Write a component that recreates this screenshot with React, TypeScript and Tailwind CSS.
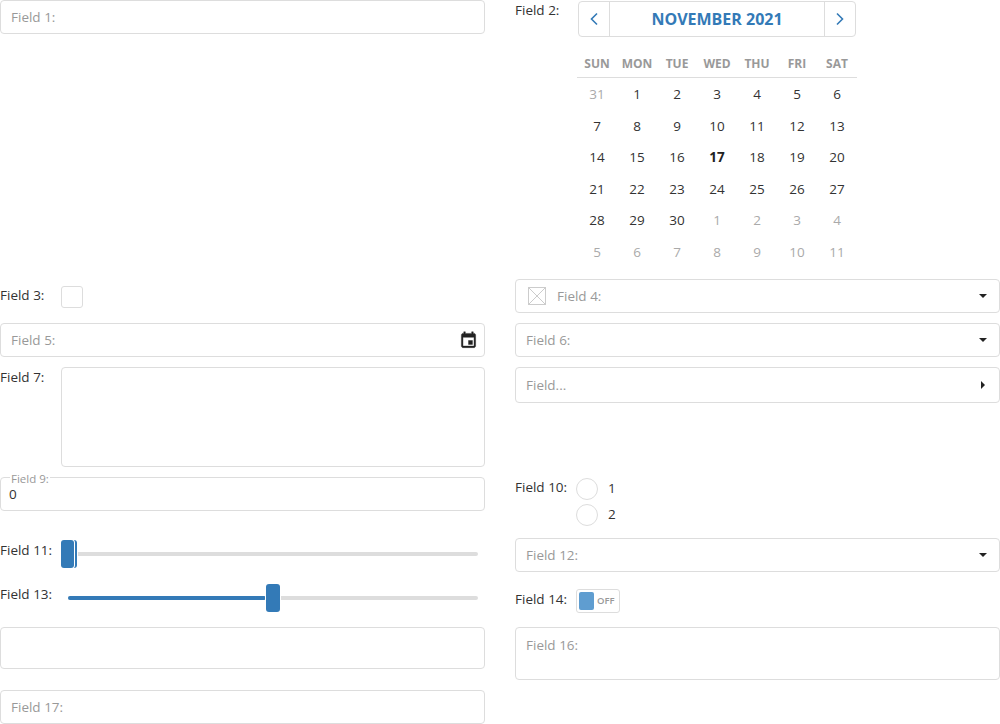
const boxClass = "flex items-center border border-[#dddddd] rounded-[4px] bg-white";
const placeholderClass = "text-[#999999]";

const headers = ["SUN", "MON", "TUE", "WED", "THU", "FRI", "SAT"];
const weeks = [
  [31, 1, 2, 3, 4, 5, 6],
  [7, 8, 9, 10, 11, 12, 13],
  [14, 15, 16, 17, 18, 19, 20],
  [21, 22, 23, 24, 25, 26, 27],
  [28, 29, 30, 1, 2, 3, 4],
  [5, 6, 7, 8, 9, 10, 11],
];

function Caret({ right }: { right?: boolean }) {
  return (
    <svg width="10" height="10" viewBox="0 0 10 10" className="shrink-0">
      {right ? <path d="M3 1 L7 5 L3 9 Z" fill="#222222" /> : <path d="M1 3 H9 L5 7 Z" fill="#222222" />}
    </svg>
  );
}

function InputBox({ text, className = "h-[34px]" }: { text?: string; className?: string }) {
  return (
    <div className={`${boxClass} ${className} pl-[10px]`}>
      <span className={placeholderClass}>{text}</span>
    </div>
  );
}

function SelectBox({ text, right, className = "h-[34px]" }: { text: string; right?: boolean; className?: string }) {
  return (
    <div className={`${boxClass} ${className} pl-[10px] pr-[11px] justify-between`}>
      <span className={placeholderClass}>{text}</span>
      <Caret right={right} />
    </div>
  );
}

function Calendar() {
  return (
    <div className="w-[280px]">
      <div className="ml-px w-[278px] h-[36px] mt-px flex border border-[#dddddd] rounded-[4px]">
        <div className="w-[31px] flex items-center justify-center border-r border-[#dddddd]">
          <svg width="10" height="14" viewBox="0 0 10 14" fill="none" stroke="#337ab7" strokeWidth="1.6">
            <path d="M8 1.5 L2.5 7 L8 12.5" />
          </svg>
        </div>
        <div className="flex-1 flex items-center justify-center text-[#337ab7] text-[16px] font-bold">NOVEMBER 2021</div>
        <div className="w-[31px] flex items-center justify-center border-l border-[#dddddd]">
          <svg width="10" height="14" viewBox="0 0 10 14" fill="none" stroke="#337ab7" strokeWidth="1.6">
            <path d="M2 1.5 L7.5 7 L2 12.5" />
          </svg>
        </div>
      </div>
      <div className="grid grid-cols-7 mt-[15px] h-[26px] border-b border-[#dddddd] text-[12px] font-bold text-[#999999] leading-[24px] text-center">
        {headers.map((h) => (
          <div key={h}>{h}</div>
        ))}
      </div>
      <div className="grid grid-cols-7 auto-rows-[31.6px] pt-px text-center leading-[31.6px]">
        {weeks.map((week, w) =>
          week.map((day, d) => {
            const muted = (w === 0 && day > 20) || (w >= 4 && day < 20 && !(w === 4 && day > 20));
            return (
              <div key={`${w}-${d}`} className={day === 17 && w === 2 ? "font-bold text-[#222222]" : muted ? "text-[#aaaaaa]" : "text-[#333333]"}>
                {day}
              </div>
            );
          }),
        )}
      </div>
    </div>
  );
}

function Slider({ label, percent, filled, range }: { label: string; percent: number; filled?: boolean; range?: boolean }) {
  return (
    <div className="flex h-[30px]">
      <span className="w-[61px] shrink-0 leading-[22px] text-[#333333]">{label}</span>
      <div className="relative flex-1 flex items-center">
        <div className="h-[4px] w-full ml-[7px] mr-[7px] rounded-full bg-[#dddddd]" />
        {filled && <div className="absolute left-[7px] top-[13px] h-[4px] w-[198px] rounded-full bg-[#337ab7]" />}
        {range && <div className="absolute left-[2px] top-[1px] w-[14px] h-[28px] rounded-[3px] bg-[#337ab7] ring-1 ring-white" />}
        <div
          className={`absolute top-[1px] h-[28px] rounded-[3px] bg-[#337ab7] ring-1 ring-white ${range ? "w-[13px]" : "w-[14px]"}`}
          style={{ left: `${percent}px` }}
        />
      </div>
    </div>
  );
}

export default function App() {
  return (
    <div
      className="w-[1000px] h-[724px] overflow-hidden bg-white text-[13.5px] text-[#333333] grid grid-cols-[485px_485px] gap-x-[30px] gap-y-[10px] grid-rows-[269px_34px_34px_100px_52px_34px_34px_53px_34px]"
      style={{ fontFamily: '"Open Sans", "Noto Sans", sans-serif' }}
    >
      <InputBox text="Field 1:" />
      <div className="flex">
        <span className="w-[62px] shrink-0 leading-[20px]">Field 2:</span>
        <Calendar />
      </div>

      <div className="flex">
        <span className="w-[61px] leading-[32px]">Field 3:</span>
        <div className="w-[22px] h-[22px] mt-[7px] border border-[#dddddd] rounded-[3px]" />
      </div>
      <div className={`${boxClass} h-[34px] pl-[12px] pr-[11px]`}>
        <svg width="18" height="18" viewBox="0 0 18 18" fill="none" stroke="#cccccc" className="shrink-0">
          <rect x="0.5" y="0.5" width="17" height="17" />
          <path d="M0.5 0.5 L17.5 17.5 M17.5 0.5 L0.5 17.5" />
        </svg>
        <span className={`${placeholderClass} ml-[11px] flex-1`}>Field 4:</span>
        <Caret />
      </div>

      <div className={`${boxClass} h-[34px] pl-[10px] pr-[6px] justify-between`}>
        <span className={placeholderClass}>Field 5:</span>
        <svg width="19" height="19" viewBox="0 0 24 24" fill="#222222" stroke="#222222" strokeWidth="0.5">
          <path d="M17 12h-5v5h5v-5zM16 1v2H8V1H6v2H5c-1.11 0-1.99.9-1.99 2L3 19c0 1.1.89 2 2 2h14c1.1 0 2-.9 2-2V5c0-1.1-.9-2-2-2h-1V1h-2zm3 18H5V8h14v11z" />
        </svg>
      </div>
      <SelectBox text="Field 6:" />

      <div className="flex">
        <span className="w-[61px] shrink-0 leading-[20px]">Field 7:</span>
        <div className="flex-1 h-[100px] border border-[#dddddd] rounded-[4px]" />
      </div>
      <SelectBox text="Field..." right className="h-[36px]" />

      <div className={`${boxClass} relative h-[34px] pl-[8px]`}>
        <span className="absolute left-[9px] top-[-5px] px-px bg-white text-[11.5px] leading-[12px] text-[#999999]">Field 9:</span>
        <span>0</span>
      </div>
      <div className="flex">
        <span className="w-[61px] shrink-0 leading-[20px]">Field 10:</span>
        <div className="flex flex-col gap-[4px] pt-[1px]">
          {["1", "2"].map((v) => (
            <div key={v} className="flex items-center h-[22px]">
              <div className="w-[22px] h-[22px] rounded-full border border-[#dddddd]" />
              <span className="ml-[10px] -mt-px">{v}</span>
            </div>
          ))}
        </div>
      </div>

      <Slider label="Field 11:" percent={0} range />
      <SelectBox text="Field 12:" className="h-[34px] -mt-px" />

      <Slider label="Field 13:" percent={205} filled />
      <div className="flex">
        <span className="w-[61px] shrink-0 leading-[32px]">Field 14:</span>
        <div className="mt-[6px] w-[44px] h-[24px] flex items-center border border-[#dddddd] rounded-[3px] px-[2px]">
          <div className="w-[15px] h-[18px] rounded-[2px] bg-[#5f9dd0]" />
          <span className="ml-[3px] text-[9.5px] font-semibold text-[#999999]">OFF</span>
        </div>
      </div>

      <InputBox className="h-[42px]" />
      <div className={`${boxClass} h-[53px] pl-[10px] !items-start pt-[7px]`}>
        <span className={placeholderClass}>Field 16:</span>
      </div>

      <InputBox text="Field 17:" />
      <div />
    </div>
  );
}
